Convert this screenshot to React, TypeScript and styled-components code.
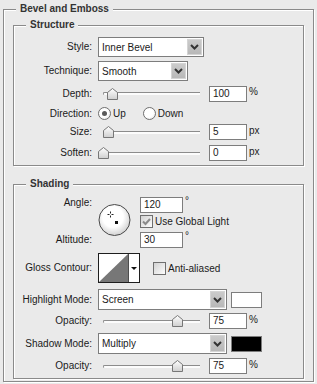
import React from "react"
import styled, { createGlobalStyle } from "styled-components"

const BG = "#eaeaea"

const GlobalStyle = createGlobalStyle`
  html, body {
    margin: 0;
    padding: 0;
    background: ${BG};
  }
  body {
    font-family: "Liberation Sans", Arial, sans-serif;
    font-size: 10px;
    color: #1a1a1a;
  }
`

const Panel = styled.div`
  width: 317px;
  height: 384px;
  box-sizing: border-box;
  padding: 3px 3px 0;
`

const Group = styled.fieldset<{ $top?: number; $pad: string }>`
  margin: ${(p) => p.$top ?? 0}px 0 0;
  padding: ${(p) => p.$pad};
  border: 1px solid #8a8a8a;
  box-shadow: 1px 1px 0 #fff, inset 1px 1px 0 #fff;
  min-width: 0;
`

const Legend = styled.legend<{ $offset: number }>`
  margin-left: ${(p) => p.$offset}px;
  padding: 0 4px;
  font-weight: bold;
  line-height: 12px;
  color: #333;
  background: ${BG};
`

const Row = styled.div<{ $h: number; $mt: number }>`
  display: grid;
  grid-template-columns: 78px 1fr;
  column-gap: 6px;
  align-items: center;
  height: ${(p) => p.$h}px;
  margin-top: ${(p) => p.$mt}px;
`

const Label = styled.div`
  text-align: right;
  white-space: nowrap;
  line-height: 12px;
`

const LabelStack = styled.div`
  align-self: stretch;
  display: flex;
  flex-direction: column;
  justify-content: space-between;
  padding: 1px 0 2px;
`

const Controls = styled.div<{ $gap?: number; $top?: boolean }>`
  display: flex;
  align-items: ${(p) => (p.$top ? "flex-start" : "center")};
  gap: ${(p) => p.$gap ?? 0}px;
  height: 100%;
`

const SelectBox = styled.div<{ $w: number; $h: number }>`
  width: ${(p) => p.$w}px;
  height: ${(p) => p.$h}px;
  box-sizing: border-box;
  border: 1px solid #7d7d7d;
  background: #fff;
  display: flex;
  align-items: center;
  justify-content: space-between;
  padding: 1px 1px 1px 3px;
  white-space: nowrap;
`

const SelectArrow = styled.div`
  width: 15px;
  height: 100%;
  box-sizing: border-box;
  border: 1px solid #d4d4d4;
  background: linear-gradient(#cbcbcb, #b8b8b8);
  display: flex;
  align-items: center;
  justify-content: center;
`

const NumberBox = styled.div<{ $w: number }>`
  width: ${(p) => p.$w}px;
  height: 16px;
  box-sizing: border-box;
  border: 1px solid #7d7d7d;
  background: #fff;
  padding-left: 3px;
  line-height: 14px;
`

const Unit = styled.span<{ $top?: boolean }>`
  margin-left: 2px;
  align-self: ${(p) => (p.$top ? "flex-start" : "center")};
  line-height: ${(p) => (p.$top ? "10px" : "12px")};
  margin-top: ${(p) => (p.$top ? "-1px" : "-3px")};
`

const SliderWrap = styled.div`
  position: relative;
  width: 111px;
  height: 100%;
  box-sizing: border-box;
  padding-left: 5px;
  display: flex;
  align-items: center;
  flex-shrink: 0;
`

const Track = styled.div`
  width: 97px;
  height: 3px;
  box-sizing: border-box;
  border-top: 1px solid #8c8c8c;
  border-left: 1px solid #8c8c8c;
  border-radius: 2px 0 0 2px;
  background: #fcfcfc;
`

const Thumb = styled.svg`
  position: absolute;
  top: 50%;
  margin-top: -6px;
`

const Option = styled.label`
  display: flex;
  align-items: center;
  gap: 2px;
`

const Radio = styled.span<{ $on?: boolean }>`
  width: 13px;
  height: 13px;
  box-sizing: border-box;
  border-radius: 50%;
  border: 1px solid #6f6f6f;
  background: radial-gradient(circle at 40% 40%, #fff 50%, #dcdcdc);
  display: flex;
  align-items: center;
  justify-content: center;
  &::after {
    content: "";
    display: ${(p) => (p.$on ? "block" : "none")};
    width: 5px;
    height: 5px;
    border-radius: 50%;
    background: #5a5a5a;
  }
`

const Check = styled.span`
  width: 13px;
  height: 13px;
  box-sizing: border-box;
  border: 1px solid #6f6f6f;
  background: linear-gradient(135deg, #d2d2d2, #fdfdfd);
  display: flex;
  align-items: center;
  justify-content: center;
  flex-shrink: 0;
`

const AngleStack = styled.div`
  display: flex;
  flex-direction: column;
  padding-top: 1px;
  margin-left: 9px;
`

const Line = styled.div<{ $mt?: number }>`
  display: flex;
  align-items: center;
  margin-top: ${(p) => p.$mt ?? 0}px;
`

const DialWrap = styled.div`
  margin-top: 7px;
  width: 33px;
  height: 34px;
`

const Contour = styled.div`
  display: flex;
  width: 42px;
  height: 30px;
  box-sizing: border-box;
  border: 1px solid #1e1e1e;
  background: #fff;
`

const ContourArrow = styled.div`
  flex: 1;
  display: flex;
  align-items: center;
  justify-content: center;
  &::after {
    content: "";
    border-left: 3px solid transparent;
    border-right: 3px solid transparent;
    border-top: 3px solid #111;
  }
`

const Swatch = styled.div<{ $color: string }>`
  width: 31px;
  height: 16px;
  box-sizing: border-box;
  border: 1px solid #7d7d7d;
  background: ${(p) => p.$color};
  margin-left: 4px;
`

const Chevron = () => (
  <svg width='9' height='6' viewBox='0 0 9 6'>
    <polyline points='1,1 4.5,4.5 8,1' fill='none' stroke='#333' strokeWidth='2' />
  </svg>
)

const Select: React.FC<{ w: number; h: number; value: string }> = ({ w, h, value }) => (
  <SelectBox $w={w} $h={h}>
    <span>{value}</span>
    <SelectArrow>
      <Chevron />
    </SelectArrow>
  </SelectBox>
)

const Slider: React.FC<{ pos: number }> = ({ pos }) => (
  <SliderWrap>
    <Track />
    <Thumb width='11' height='12' viewBox='0 0 11 12' style={{ left: 5 + pos - 5.5 }}>
      <defs>
        <linearGradient id='thumbFill' x1='0' y1='0' x2='0' y2='1'>
          <stop offset='0' stopColor='#ffffff' />
          <stop offset='1' stopColor='#cfcfcf' />
        </linearGradient>
      </defs>
      <polygon
        points='0.5,4.5 5.5,0.5 10.5,4.5 10.5,11.5 0.5,11.5'
        fill='url(#thumbFill)'
        stroke='#777'
      />
    </Thumb>
  </SliderWrap>
)

const SliderRow: React.FC<{ label: string; pos: number; value: string; unit: string; h: number; mt: number }> = ({
  label,
  pos,
  value,
  unit,
  h,
  mt
}) => (
  <Row $h={h} $mt={mt}>
    <Label>{label}</Label>
    <Controls>
      <Slider pos={pos} />
      <NumberBox $w={38}>{value}</NumberBox>
      <Unit>{unit}</Unit>
    </Controls>
  </Row>
)

const CheckMark = () => (
  <svg width='9' height='8' viewBox='0 0 9 8'>
    <polyline points='1,3.5 3.5,6 8,1' fill='none' stroke='#8a8a8a' strokeWidth='2' />
  </svg>
)

const Dial = () => (
  <DialWrap>
    <svg width='33' height='34' viewBox='0 0 33 34'>
      <defs>
        <radialGradient id='dialFill' cx='0.45' cy='0.4' r='0.6'>
          <stop offset='0.55' stopColor='#ffffff' />
          <stop offset='1' stopColor='#d2d2d2' />
        </radialGradient>
      </defs>
      <circle cx='16.5' cy='17' r='15.5' fill='url(#dialFill)' stroke='#4a4a4a' />
      <path d='M12.5 8.5v2M12.5 12.5v2M9.5 11.5h2M13.5 11.5h2' stroke='#222' strokeWidth='1' />
      <rect x='17' y='18' width='3' height='3' fill='#111' />
    </svg>
  </DialWrap>
)

const App: React.FC = () => (
  <Panel>
    <GlobalStyle />
    <Group $pad='4px 9px 2px 9px'>
      <Legend $offset={3}>Bevel and Emboss</Legend>

      <Group $pad='0 0 4px 0'>
        <Legend $offset={12}>Structure</Legend>
        <Row $h={20} $mt={6}>
          <Label>Style:</Label>
          <Controls>
            <Select w={106} h={20} value='Inner Bevel' />
          </Controls>
        </Row>
        <Row $h={20} $mt={4}>
          <Label>Technique:</Label>
          <Controls>
            <Select w={90} h={20} value='Smooth' />
          </Controls>
        </Row>
        <SliderRow label='Depth:' pos={9} value='100' unit='%' h={17} mt={4} />
        <Row $h={15} $mt={4}>
          <Label>Direction:</Label>
          <Controls $gap={17}>
            <Option>
              <Radio $on />
              Up
            </Option>
            <Option>
              <Radio />
              Down
            </Option>
          </Controls>
        </Row>
        <SliderRow label='Size:' pos={5} value='5' unit='px' h={16} mt={3} />
        <SliderRow label='Soften:' pos={0} value='0' unit='px' h={16} mt={5} />
      </Group>

      <Group $top={12} $pad='0 0 4px 0'>
        <Legend $offset={12}>Shading</Legend>
        <Row $h={52} $mt={6}>
          <LabelStack>
            <Label>Angle:</Label>
            <Label>Altitude:</Label>
          </LabelStack>
          <Controls $top>
            <Dial />
            <AngleStack>
              <Line>
                <NumberBox $w={43}>120</NumberBox>
                <Unit $top>°</Unit>
              </Line>
              <Line $mt={2}>
                <Option>
                  <Check>
                    <CheckMark />
                  </Check>
                  Use Global Light
                </Option>
              </Line>
              <Line $mt={4}>
                <NumberBox $w={43}>30</NumberBox>
                <Unit $top>°</Unit>
              </Line>
            </AngleStack>
          </Controls>
        </Row>
        <Row $h={30} $mt={5}>
          <Label>Gloss Contour:</Label>
          <Controls $gap={13}>
            <Contour>
              <svg width='30' height='28' viewBox='0 0 30 28'>
                <polygon points='0,28 29,0 29,28' fill='#777' />
                <line x1='29.5' y1='0' x2='29.5' y2='28' stroke='#4d4d4d' />
              </svg>
              <ContourArrow />
            </Contour>
            <Option>
              <Check />
              Anti-aliased
            </Option>
          </Controls>
        </Row>
        <Row $h={21} $mt={6}>
          <Label>Highlight Mode:</Label>
          <Controls>
            <Select w={129} h={21} value='Screen' />
            <Swatch $color='#ffffff' />
          </Controls>
        </Row>
        <SliderRow label='Opacity:' pos={74} value='75' unit='%' h={16} mt={3} />
        <Row $h={21} $mt={4}>
          <Label>Shadow Mode:</Label>
          <Controls>
            <Select w={129} h={21} value='Multiply' />
            <Swatch $color='#000000' />
          </Controls>
        </Row>
        <SliderRow label='Opacity:' pos={74} value='75' unit='%' h={16} mt={4} />
      </Group>
    </Group>
  </Panel>
)

export default App
